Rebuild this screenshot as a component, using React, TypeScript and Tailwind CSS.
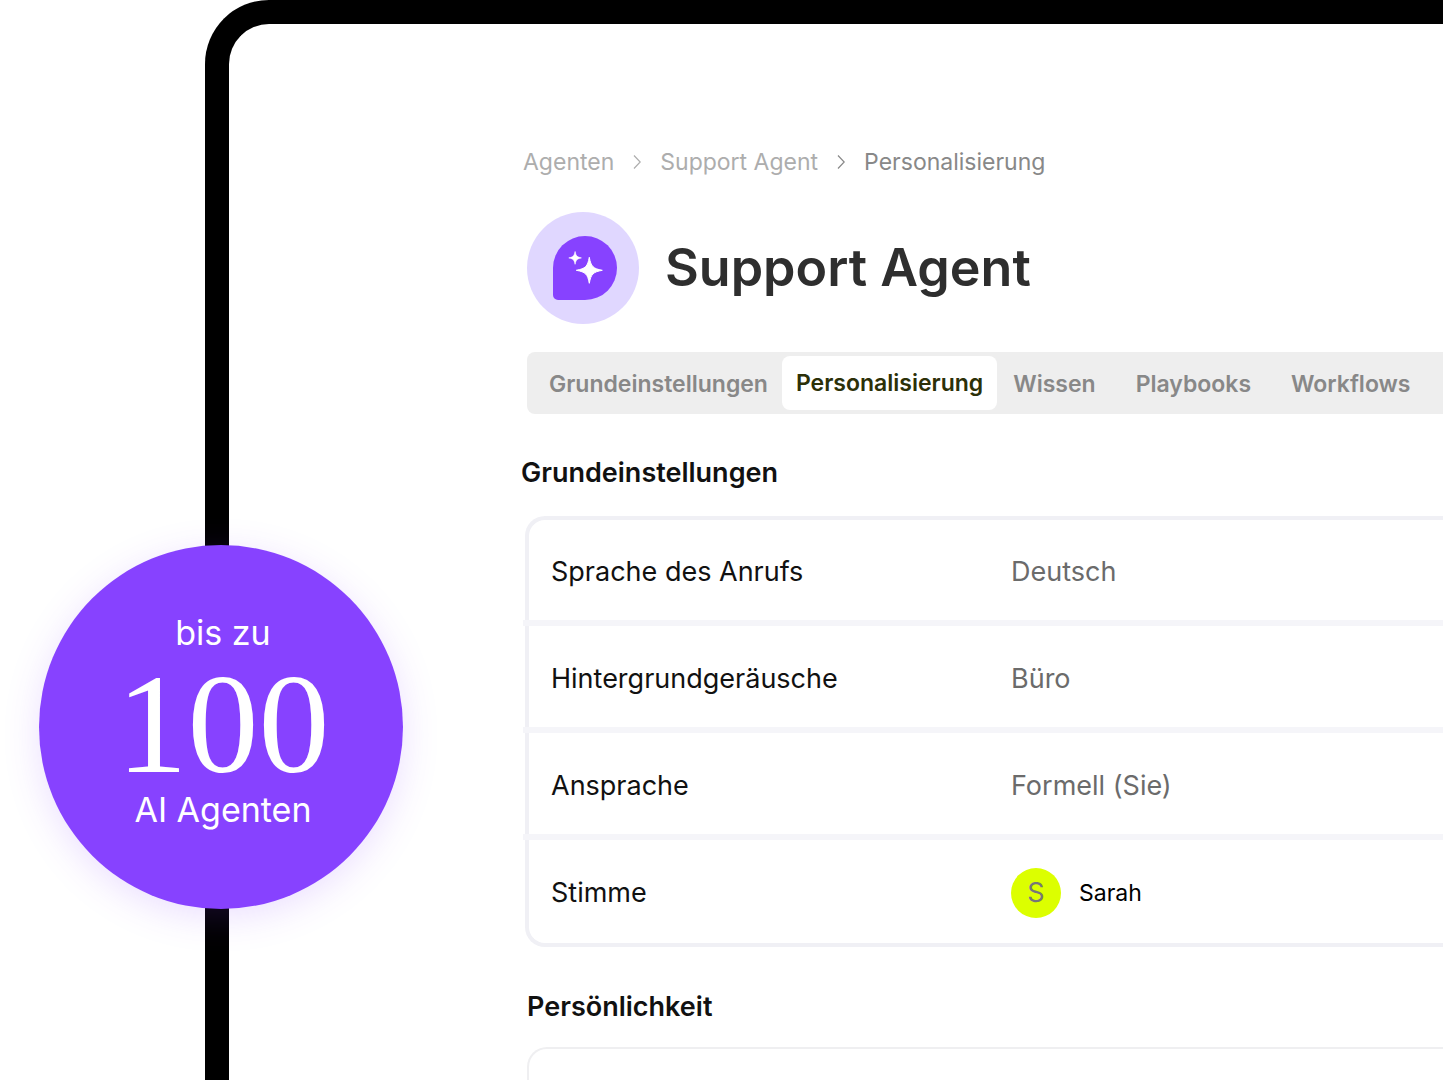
import type { ReactNode } from "react";
import { clsx } from "clsx";

const tabs = ["Grundeinstellungen", "Personalisierung", "Wissen", "Playbooks", "Workflows"];

type Setting = {
  label: string;
  value: ReactNode;
};

const settings: Setting[] = [
  { label: "Sprache des Anrufs", value: "Deutsch" },
  { label: "Hintergrundgeräusche", value: "Büro" },
  { label: "Ansprache", value: "Formell (Sie)" },
  { label: "Stimme", value: <Voice name="Sarah" /> }
];

function Voice({ name }: { name: string }) {
  return (
    <span className="flex items-center gap-[18px]">
      <span className="flex size-[50px] items-center justify-center rounded-full bg-[#dcff00] text-[#777777]">
        {name[0]}
      </span>
      <span className="text-[23px] text-black">{name}</span>
    </span>
  );
}

function Chevron({ className }: { className?: string }) {
  return (
    <svg
      aria-hidden="true"
      viewBox="0 0 8 14"
      className={clsx("mx-[19px] h-3.5 w-2 fill-none stroke-current", className)}
    >
      <path d="M1 .5l6.200 6.500L1 13.500" strokeWidth="1.200" />
    </svg>
  );
}

function AgentIcon() {
  return (
    <svg aria-hidden="true" viewBox="0 0 112 112" className="size-28 shrink-0">
      <circle cx="56" cy="56" r="56" fill="#e0d7ff" />
      <path d="M26 56a32 32 0 1 1 32 32H31a5 5 0 0 1-5-5z" fill="#8742ff" />
      <path
        d="M62.300 45.300C64 54.500 66 56.600 75.300 58.300 66 60 64 62.100 62.300 71.300 60.600 62.100 58.600 60 49.300 58.300 58.600 56.600 60.600 54.500 62.300 45.300z"
        fill="#fff"
        stroke="#fff"
        strokeWidth="1"
        strokeLinejoin="round"
      />
      <path
        d="M48.100 39.500C49 44 50 45 54.400 45.900 50 46.800 49 47.800 48.100 52.300 47.200 47.800 46.200 46.800 41.800 45.900 46.200 45 47.200 44 48.100 39.500z"
        fill="#fff"
        stroke="#fff"
        strokeWidth=".6"
        strokeLinejoin="round"
      />
    </svg>
  );
}

function Breadcrumb() {
  return (
    <nav aria-label="Breadcrumb" className="-ml-1 flex items-center text-[23px] leading-8 whitespace-nowrap text-[#adadad]">
      <a href="#agenten">Agenten</a>
      <Chevron />
      <a href="#support-agent">Support Agent</a>
      <Chevron className="text-[#888888]" />
      <a href="#personalisierung" aria-current="page" className="text-[#888888]">
        Personalisierung
      </a>
    </nav>
  );
}

function Badge() {
  return (
    <aside className="absolute top-[545px] left-[39px] flex size-[364px] flex-col items-center rounded-full bg-[#8742ff] pt-16 pl-1 text-[34px] text-white shadow-[0_8px_36px_rgba(135,66,255,0.17)]">
      <span className="leading-[48px]">bis zu</span>
      <strong className="font-['Liberation_Serif',serif] text-[142px] leading-[134px] font-normal">100</strong>
      <span className="leading-[38px]">AI Agenten</span>
    </aside>
  );
}

export default function App() {
  return (
    <div className="relative h-screen overflow-hidden bg-white pl-[205px] font-[Inter,sans-serif] text-[#111111]">
      <main className="min-h-full rounded-tl-[64px] border-t-24 border-l-24 border-black pt-[122px] pl-[298px]">
        <Breadcrumb />

        <header className="mt-[34px] flex items-center gap-[26px]">
          <AgentIcon />
          <h1 className="text-[52px] leading-[64px] font-semibold whitespace-nowrap text-[#2e2e2e]">Support Agent</h1>
        </header>

        <div role="tablist" className="mt-7 flex rounded-l-lg bg-[#eeeeee] py-1 pl-2">
          {tabs.map((tab) => (
            <button
              key={tab}
              type="button"
              role="tab"
              aria-selected={tab === "Personalisierung"}
              className="h-[54px] shrink-0 rounded-lg px-3.5 pt-0.5 text-[23px] font-semibold text-[#888888] nth-[n+3]:pr-6 nth-[n+3]:pl-4 aria-selected:bg-white aria-selected:pt-0 aria-selected:text-[#2c3008]"
            >
              {tab}
            </button>
          ))}
        </div>

        <section>
          <h2 className="mt-[39px] -ml-1.5 text-[27px] leading-10 font-semibold">Grundeinstellungen</h2>
          <dl className="mt-[23px] -ml-0.5 rounded-l-[20px] border-4 border-r-0 border-[#f0f0f5] text-[27px]">
            {settings.map((setting, index) => (
              <div
                key={setting.label}
                className={clsx(
                  "-ml-1.5 flex items-center pt-[5px] pl-7 last:h-[109px] last:pt-[3px]",
                  index === 0 ? "h-[100px]" : "h-[107px] border-t-6 border-[#f5f5f9]"
                )}
              >
                <dt className="w-[460px] shrink-0">{setting.label}</dt>
                <dd className="text-[#6b6b6b]">{setting.value}</dd>
              </div>
            ))}
          </dl>
        </section>

        <section>
          <h2 className="mt-10 text-[27px] leading-10 font-semibold">Persönlichkeit</h2>
          <div className="mt-5 h-40 rounded-l-[20px] border-2 border-r-0 border-[#efeff1]" />
        </section>
      </main>

      <Badge />
    </div>
  );
}
